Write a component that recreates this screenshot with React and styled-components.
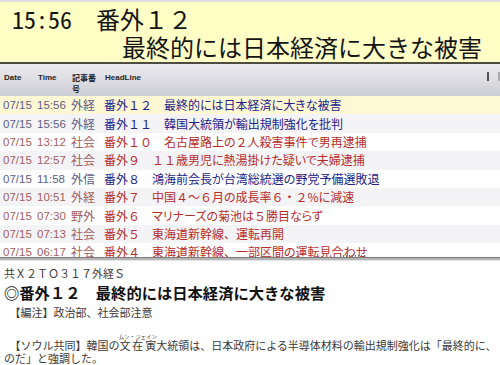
import React from 'react';
import styled, { createGlobalStyle } from 'styled-components';

const Global = createGlobalStyle`
  html, body { margin: 0; padding: 0; background: #fff; }
  body {
    width: 500px; height: 365px; overflow: hidden;
    font-family: "Noto Sans CJK JP", sans-serif;
  }
`;

const Page = styled.div`
  width: 500px;
  height: 365px;
  display: flex;
  flex-direction: column;
  overflow: hidden;
`;

const TitleBar = styled.header`
  box-sizing: border-box;
  height: 64px;
  border-top: 2px solid #dcdcdc;
  border-bottom: 2px solid #4c4c40;
  background: #ffffc6;
  padding: 3px 18px 0 12px;
  font-family: "Noto Sans Mono CJK JP", "Noto Sans CJK JP", monospace;
  font-size: 24px;
  line-height: 28px;
  color: #141414;
  white-space: nowrap;
`;

const TitleLine = styled.div`
  text-align: ${p => (p.$right ? 'right' : 'left')};
`;

const cols = '34px 34px 33px 1fr';

const HeaderRow = styled.div`
  box-sizing: border-box;
  height: 32px;
  display: grid;
  grid-template-columns: ${cols} 14px;
  padding: 8px 0 0 4px;
  background: linear-gradient(#ececf0, #cdcdd4);
  font-weight: bold;
  line-height: 11px;
  color: #262626;
`;

const HeadCell = styled.div`
  font-size: 8px;
  font-family: ${p => (p.$jp ? '"Noto Sans CJK JP", sans-serif' : '"Liberation Sans", Arial, sans-serif')};
`;

const Marks = styled.div`
  display: flex;
  align-items: flex-start;
  gap: 9px;
  padding-left: 1px;
`;

const Mark = styled.span`
  display: block;
  width: 2px;
  height: 9px;
  background: ${p => p.$c};
`;

const List = styled.div`
  height: 161px;
  overflow: hidden;
`;

const Row = styled.div`
  height: 18.4px;
  display: grid;
  grid-template-columns: ${cols};
  align-items: center;
  padding-left: 3px;
  background: ${p => (p.$sel ? '#fff8d4' : p.$alt ? '#f4f4f6' : '#ffffff')};
  white-space: nowrap;
  font-size: 12px;
  line-height: 18px;
`;

const Num = styled.span`
  font-family: "Liberation Sans", Arial, sans-serif;
  font-size: 11.5px;
  color: ${p => (p.$blue ? '#5e5e82' : '#a26060')};
`;

const Cat = styled.span`
  font-family: "Noto Sans CJK JP", sans-serif;
  color: ${p => (p.$blue ? '#5e5e82' : '#a26060')};
`;

const Head = styled.span`
  font-family: "Noto Sans CJK JP", sans-serif;
  color: ${p => (p.$blue ? '#22228a' : '#b82c2c')};
`;

const Kana = styled.span`
  font-feature-settings: "palt";
`;

const Splitter = styled.div`
  position: relative;
  height: 4px;
  background: linear-gradient(#7c7c7c 0 1px, #b4b4b4 1px 3px, #e4e4e4 3px);
`;

const Grip = styled.div`
  position: absolute;
  left: 340px;
  top: -2px;
  width: 27px;
  height: 2px;
  background: repeating-linear-gradient(90deg, #777 0 1px, transparent 1px 3px);
`;

const Detail = styled.div`
  flex: 1;
  padding: 4px 0 0 4px;
  font-family: "Noto Sans CJK JP", sans-serif;
  font-size: 11px;
  line-height: 16px;
  color: #3a3a3a;
  white-space: nowrap;
  overflow: hidden;
`;

const DetailLine = styled.div`
  margin-top: ${p => p.$mt || 0}px;
  height: 16px;
`;

const DetailTitle = styled.div`
  font-size: 15.3px;
  font-weight: bold;
  line-height: 22px;
  color: #111;
`;

const Ruby = styled.ruby`
  ruby-position: over;
  rt {
    font-size: 5.5px;
    line-height: 6px;
  }
`;

const SP = '\u3000';

// hiragana/katakana runs are set proportionally, as in the original list font
const withKana = text =>
  text.split(/([\u3041-\u309f\u30a1-\u30fa\u30fc]+)/).map((part, i) =>
    i % 2 === 1 ? <Kana key={i}>{part}</Kana> : part
  );

const rows = [
  { t: '15:56', c: '外経', n: '番外１２', h: '最終的には日本経済に大きな被害', blue: true, sel: true },
  { t: '15:56', c: '外経', n: '番外１１', h: '韓国大統領が輸出規制強化を批判', blue: true },
  { t: '13:12', c: '社会', n: '番外１０', h: '名古屋路上の２人殺害事件で男再逮捕' },
  { t: '12:57', c: '社会', n: '番外９', h: '１１歳男児に熱湯掛けた疑いで夫婦逮捕' },
  { t: '11:58', c: '外信', n: '番外８', h: '鴻海前会長が台湾総統選の野党予備選敗退', blue: true },
  { t: '10:51', c: '外経', n: '番外７', h: '中国４～６月の成長率６・２%に減速' },
  { t: '07:30', c: '野外', n: '番外６', h: 'マリナーズの菊池は５勝目ならず' },
  { t: '07:13', c: '社会', n: '番外５', h: '東海道新幹線、運転再開' },
  { t: '06:17', c: '社会', n: '番外４', h: '東海道新幹線、一部区間の運転見合わせ' },
];

export default function App() {
  return (
    <Page>
      <Global />
      <TitleBar>
        <TitleLine>{`15:56${SP}番外１２`}</TitleLine>
        <TitleLine $right>最終的には日本経済に大きな被害</TitleLine>
      </TitleBar>
      <HeaderRow>
        <HeadCell>Date</HeadCell>
        <HeadCell>Time</HeadCell>
        <HeadCell $jp>記事番<br />号</HeadCell>
        <HeadCell>HeadLine</HeadCell>
        <Marks>
          <Mark $c="#555" />
          <Mark $c="#aaa" />
        </Marks>
      </HeaderRow>
      <List>
        {rows.map((r, i) => (
          <Row key={i} $sel={r.sel} $alt={i % 2 === 1}>
            <Num $blue={r.blue}>07/15</Num>
            <Num $blue={r.blue}>{r.t}</Num>
            <Cat $blue={r.blue}>{r.c}</Cat>
            <Head $blue={r.blue}>
              {r.n + SP}
              {withKana(r.h)}
            </Head>
          </Row>
        ))}
      </List>
      <Splitter>
        <Grip />
      </Splitter>
      <Detail>
        <DetailLine>共Ｘ２ＴＯ３１７外経Ｓ</DetailLine>
        <DetailTitle>{`◎番外１２${SP}最終的には日本経済に大きな被害`}</DetailTitle>
        <DetailLine $mt={1}>{`${SP}【編注】政治部、社会部注意`}</DetailLine>
        <DetailLine $mt={14}>
          {`${SP}【ソウル共同】韓国の`}
          <Ruby>文在寅<rt>ムン・ジェイン</rt></Ruby>
          {'大統領は、日本政府による半導体材料の輸出規制強化は「最終的に、'}
        </DetailLine>
        <DetailLine>のだ」と強調した。</DetailLine>
      </Detail>
    </Page>
  );
}
